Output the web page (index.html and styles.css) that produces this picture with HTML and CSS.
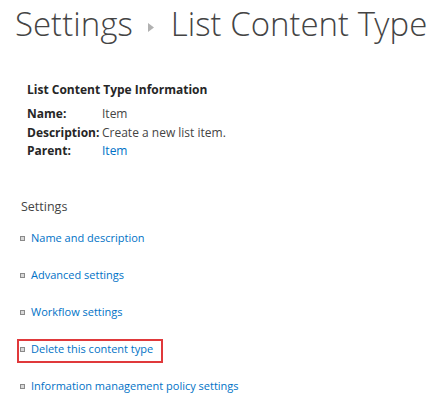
FILE: index.html
```html
<!DOCTYPE html>
<html>
<head>
<meta charset="utf-8">
<link rel="stylesheet" href="styles.css">
</head>
<body>
<div class="page">
  <h1 class="title">
    <span class="crumb">Settings</span>
    <span class="sep"><svg width="6" height="9" viewBox="0 0 6 9"><path d="M0 0 L6 4.5 L0 9 Z" fill="#b1b1b1"/></svg></span>
    <span class="crumb">List Content Type</span>
  </h1>

  <section class="info">
    <h2 class="info-head">List Content Type Information</h2>
    <div class="info-grid">
      <span class="label">Name:</span><span class="value">Item</span>
      <span class="label">Description:</span><span class="value">Create a new list item.</span>
      <span class="label">Parent:</span><a class="value link" href="#">Item</a>
    </div>
  </section>

  <section class="settings">
    <h3 class="settings-head">Settings</h3>
    <ul class="settings-list">
      <li><span class="bullet"></span><a href="#">Name and description</a></li>
      <li><span class="bullet"></span><a href="#">Advanced settings</a></li>
      <li><span class="bullet"></span><a href="#">Workflow settings</a></li>
      <li class="highlight"><span class="bullet"></span><a href="#">Delete this content type</a></li>
      <li><span class="bullet"></span><a href="#">Information management policy settings</a></li>
    </ul>
  </section>
</div>
</body>
</html>
```

FILE: styles.css
```css
html, body {
  margin: 0;
  padding: 0;
  background: #ffffff;
}

.page {
  font-family: "Open Sans", "Noto Sans", "Liberation Sans", sans-serif;
  color: #444444;
  font-size: 12px;
}

.title {
  margin: 0;
  padding: 4px 0 0 15px;
  display: flex;
  align-items: baseline;
  font-family: "Open Sans Light", "Open Sans", "Noto Sans", sans-serif;
  font-weight: 300;
  font-size: 33px;
  line-height: 40px;
  color: #444444;
  white-space: nowrap;
}

.sep {
  display: inline-flex;
  align-items: center;
  padding: 0 17px 0 15px;
  align-self: center;
  margin-top: 6px;
}

.info {
  padding: 37px 0 0 27px;
}

.info-head {
  margin: 0 0 6px 0;
  font-size: 12px;
  font-weight: 700;
  line-height: 18px;
  color: #262626;
}

.info-grid {
  display: grid;
  grid-template-columns: 75px auto;
  row-gap: 0;
  line-height: 18.5px;
}

.label {
  font-weight: 700;
  color: #262626;
}

.value {
  color: #444444;
}

.link, a {
  color: #0072c6;
  text-decoration: none;
}

.settings {
  padding: 37px 0 0 21px;
}

.settings-head {
  margin: 0;
  font-size: 12.5px;
  font-weight: 400;
  line-height: 18px;
  color: #444444;
}

.settings-list {
  list-style: none;
  margin: 0;
  padding: 13px 0 0 0;
  display: flex;
  flex-direction: column;
  gap: 19px;
  font-size: 11px;
}

.settings-list li {
  display: flex;
  align-items: center;
  line-height: 18px;
  height: 18px;
}

.bullet {
  width: 3px;
  height: 3px;
  border: 1px solid #8a8a8a;
  background: #d8d8d8;
  margin-left: -1px;
  margin-right: 6px;
  margin-top: 1px;
}

.highlight {
  position: relative;
}

.highlight::after {
  content: "";
  position: absolute;
  box-sizing: border-box;
  left: -4px;
  top: -1px;
  width: 146px;
  height: 24px;
  border: 2.5px solid #e0393b;
}
```
